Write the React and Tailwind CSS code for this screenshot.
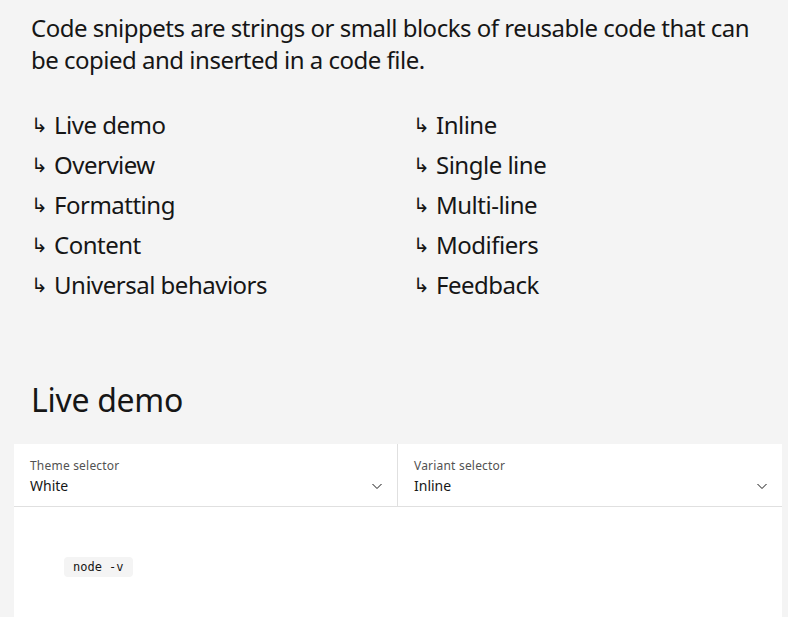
import React from 'react';

const leftLinks = ['Live demo', 'Overview', 'Formatting', 'Content', 'Universal behaviors'];
const rightLinks = ['Inline', 'Single line', 'Multi-line', 'Modifiers', 'Feedback'];

const Chevron = () => (
    <svg width="16" height="16" viewBox="0 0 16 16" fill="none" className="text-[#161616]">
        <path d="M3.5 6l4.5 4.5L12.5 6" stroke="currentColor" strokeWidth="1" />
    </svg>
);

const Select = ({ label, value, className }) => (
    <div className={`pl-4 pr-3 pt-[14px] pb-[11px] ${className}`}>
        <div className="text-[12px] leading-4 text-[#525252] tracking-[0.2px]">{label}</div>
        <div className="flex items-center justify-between mt-[3px]">
            <span className="text-[14px] leading-[18px] text-[#161616]">{value}</span>
            <Chevron />
        </div>
    </div>
);

const LinkItem = ({ text }) => (
    <li className="flex items-center h-10 text-[24px] text-[#161616] tracking-[-0.5px]">
        <span className="w-[23px] text-[20px] font-['DejaVu_Sans',sans-serif]">↳</span>
        <span>{text}</span>
    </li>
);

export default function App() {
    return (
        <div className="min-h-[617px] bg-[#f4f4f4] font-['Noto_Sans',sans-serif] overflow-hidden">
            <div className="pl-[31px] pr-4 pt-[12px]">
                <p className="text-[24px] leading-[32px] text-[#161616] tracking-[-0.5px] max-w-[740px]">
                    Code snippets are strings or small blocks of reusable code that can be copied and inserted in a code file.
                </p>
                <div className="grid grid-cols-[382px_1fr] mt-[29px]">
                    <ul>
                        {leftLinks.map((l) => <LinkItem key={l} text={l} />)}
                    </ul>
                    <ul>
                        {rightLinks.map((l) => <LinkItem key={l} text={l} />)}
                    </ul>
                </div>
                <h2 className="text-[32px] leading-10 text-[#161616] tracking-[-0.3px] mt-[75px]">Live demo</h2>
            </div>
            <div className="ml-[14px] mr-[6px] mt-[24px] bg-white h-[200px]">
                <div className="flex border-b border-[#e0e0e0]">
                    <Select label="Theme selector" value="White" className="w-[384px] border-r border-[#e0e0e0]" />
                    <Select label="Variant selector" value="Inline" className="flex-1" />
                </div>
                <div className="pl-[50px] pt-[46px]">
                    <code className="inline-block bg-[#f4f4f4] rounded px-[9px] py-[2px] text-[12px] leading-4 text-[#161616] font-['DejaVu_Sans_Mono',monospace] whitespace-pre">
                        node -v
                    </code>
                </div>
            </div>
        </div>
    );
}
